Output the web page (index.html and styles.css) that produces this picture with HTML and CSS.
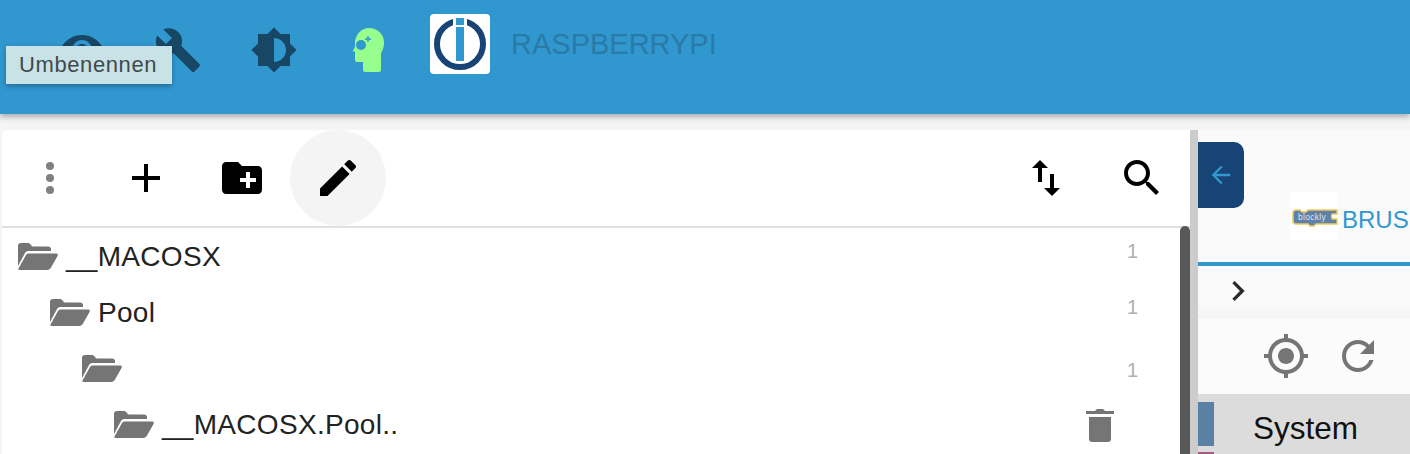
FILE: index.html
```html
<!DOCTYPE html>
<html lang="de">
<head>
  <meta charset="UTF-8">
  <meta name="viewport" content="width=device-width, initial-scale=1.0">
  <title>ioBroker</title>
  <link rel="stylesheet" href="styles.css">
</head>
<body>
  <!-- Kopfzeile -->
  <header class="app-bar">
    <svg class="bar-icon eye" viewBox="0 0 24 24"><path d="M12 4.5C7 4.5 2.73 7.61 1 12c1.73 4.39 6 7.5 11 7.5s9.27-3.11 11-7.5c-1.73-4.39-6-7.5-11-7.5zM12 17c-2.76 0-5-2.24-5-5s2.24-5 5-5 5 2.24 5 5-2.24 5-5 5zm0-8c-1.66 0-3 1.34-3 3s1.34 3 3 3 3-1.34 3-3-1.34-3-3-3z"/></svg>
    <svg class="bar-icon wrench" viewBox="0 0 24 24"><path d="M22.7 19l-9.1-9.1c.9-2.3.4-5-1.5-6.9-2-2-5-2.4-7.4-1.3L9 6 6 9 1.6 4.7C.4 7.1.9 10.1 2.9 12.1c1.9 1.9 4.6 2.4 6.9 1.5l9.1 9.1c.4.4 1 .4 1.4 0l2.3-2.3c.5-.4.5-1.1.1-1.4z"/></svg>
    <svg class="bar-icon contrast" viewBox="0 0 24 24"><path d="M20 15.31L23.31 12 20 8.69V4h-4.69L12 .69 8.69 4H4v4.69L.69 12 4 15.31V20h4.69L12 23.31 15.31 20H20v-4.69zM12 18V6c3.31 0 6 2.69 6 6s-2.69 6-6 6z"/></svg>
    <svg class="head-icon" viewBox="0 0 32 44">
      <path class="head-shape" d="M17 0c9 0 15 6.500 15 14.500 0 5.500-2 8.500-3 11V42a2 2 0 0 1-2 2H13a2 2 0 0 1-2-2v-8H5a2 2 0 0 1-2-2v-8.500H0.500L3 19V13C5 5 10 0 17 0z"/>
      <circle class="head-cut" cx="9" cy="17" r="5"/>
      <path class="head-cut" d="M13 10.300h2.300V8h1.400v2.300H19v1.400h-2.300V14h-1.400v-2.300H13z"/>
    </svg>
    <div class="logo">
      <svg viewBox="0 0 60 60">
        <circle class="logo-ring" cx="30" cy="30" r="23"/>
        <rect class="logo-gap" x="23" y="2" width="14" height="12"/>
        <rect class="logo-bar" x="26" y="4" width="8" height="7"/>
        <rect class="logo-bar" x="26" y="13" width="8" height="34"/>
      </svg>
    </div>
    <span class="host-name">RASPBERRYPI</span>
  </header>

  <div class="tooltip">Umbenennen</div>

  <div class="content">
    <!-- Skriptbaum -->
    <section class="tree-panel">
      <div class="toolbar">
        <div class="dots"><i></i><i></i><i></i></div>
        <button class="tool-btn add-btn"><svg viewBox="0 0 24 24"><path d="M19 13h-6v6h-2v-6H5v-2h6V5h2v6h6v2z"/></svg></button>
        <button class="tool-btn folder-btn"><svg viewBox="0 0 24 24"><path d="M20 6h-8l-2-2H4c-1.110 0-1.990.890-1.990 2L2 18c0 1.110.890 2 2 2h16c1.110 0 2-.890 2-2V8c0-1.110-.890-2-2-2zm-1 8h-3v3h-2v-3h-3v-2h3V9h2v3h3v2z"/></svg></button>
        <button class="tool-btn edit-btn"><svg viewBox="0 0 24 24"><path d="M3 17.250V21h3.750L17.810 9.940l-3.750-3.750L3 17.250zM20.710 7.040c.390-.390.390-1.020 0-1.410l-2.340-2.340c-.390-.390-1.020-.390-1.410 0l-1.830 1.830 3.750 3.750 1.830-1.830z"/></svg></button>
        <div class="toolbar-space"></div>
        <button class="tool-btn sort-btn"><svg viewBox="0 0 24 24"><path d="M9 3L5 6.990h3V14h2V6.990h3L9 3zm7 14.010V10h-2v7.010h-3L15 21l4-3.990h-3z"/></svg></button>
        <button class="tool-btn search-btn"><svg viewBox="0 0 24 24"><path d="M15.500 14h-.790l-.280-.270C15.410 12.590 16 11.110 16 9.500 16 5.910 13.090 3 9.500 3S3 5.910 3 9.500 5.910 16 9.500 16c1.610 0 3.090-.590 4.230-1.570l.270.280v.790l5 4.990L20.490 19l-4.990-5zm-6 0C7.010 14 5 11.990 5 9.500S7.010 5 9.500 5 14 7.010 14 9.500 11.990 14 9.500 14z"/></svg></button>
      </div>
      <div class="tree-body">
        <ul class="tree">
          <li class="tree-row">
            <svg class="folder" viewBox="0 0 40 27"><use href="#folder-open"/></svg>
            <span class="tree-name">__MACOSX</span>
            <span class="tree-count">1</span>
          </li>
          <li class="tree-row level-1">
            <svg class="folder" viewBox="0 0 40 27"><use href="#folder-open"/></svg>
            <span class="tree-name">Pool</span>
            <span class="tree-count">1</span>
          </li>
          <li class="tree-row level-2">
            <svg class="folder" viewBox="0 0 40 27"><use href="#folder-open"/></svg>
            <span class="tree-name"></span>
            <span class="tree-count">1</span>
          </li>
          <li class="tree-row level-3">
            <svg class="folder" viewBox="0 0 40 27"><use href="#folder-open"/></svg>
            <span class="tree-name">__MACOSX.Pool..</span>
            <svg class="trash" viewBox="0 0 28 36"><path d="M3 11h22v22a3 3 0 0 1-3 3H6a3 3 0 0 1-3-3zM0 5h9l2-2h6l2 2h9v3H0z"/></svg>
          </li>
        </ul>
        <div class="scroll-track"><div class="scroll-thumb"></div></div>
      </div>
    </section>

    <!-- rechte Seite -->
    <section class="side-panel">
      <div class="side-top">
        <div class="back-btn"><svg viewBox="0 0 24 24"><path d="M20 11H7.830l5.590-5.590L12 4l-8 8 8 8 1.410-1.410L7.830 13H20v-2z"/></svg></div>
        <div class="tab">
          <div class="tab-logo">
            <svg viewBox="0 0 48 48">
              <path class="blockly-block" d="M6 18h4l2 2h4l2-2h29v4h-4a1.500 1.500 0 0 0-1.500 1.500v2A1.500 1.500 0 0 0 43 27h4v5H26l-2 2h-4l-2-2H6a3 3 0 0 1-3-3v-8a3 3 0 0 1 3-3z"/>
              <text class="blockly-text" x="8" y="28">blockly</text>
            </svg>
          </div>
          <span class="tab-name">BRUS</span>
        </div>
      </div>
      <div class="tab-line"></div>
      <div class="crumb-row">
        <svg viewBox="0 0 24 24"><path d="M10 6L8.590 7.410 13.170 12l-4.580 4.590L10 18l6-6z"/></svg>
      </div>
      <div class="side-tools">
        <svg class="locate" viewBox="0 0 24 24"><path d="M12 8c-2.210 0-4 1.790-4 4s1.790 4 4 4 4-1.790 4-4-1.790-4-4-4zm8.940 3c-.460-4.170-3.770-7.480-7.940-7.940V1h-2v2.060C6.830 3.520 3.520 6.830 3.060 11H1v2h2.060c.460 4.170 3.770 7.480 7.940 7.940V23h2v-2.060c4.170-.460 7.480-3.770 7.940-7.940H23v-2h-2.060zM12 19c-3.870 0-7-3.130-7-7s3.130-7 7-7 7 3.130 7 7-3.130 7-7 7z"/></svg>
        <svg class="reload" viewBox="0 0 24 24"><path d="M17.650 6.350C16.200 4.900 14.210 4 12 4c-4.420 0-7.990 3.580-7.990 8s3.570 8 7.990 8c3.730 0 6.840-2.550 7.730-6h-2.080c-.820 2.330-3.040 4-5.650 4-3.310 0-6-2.690-6-6s2.690-6 6-6c1.660 0 3.140.690 4.220 1.780L13 11h7V4l-2.350 2.350z"/></svg>
      </div>
      <div class="category">
        <div class="category-colors"><i class="cat-blue"></i><i class="cat-pink"></i></div>
        <span class="category-name">System</span>
      </div>
    </section>
  </div>

  <svg class="defs" aria-hidden="true">
    <symbol id="folder-open" viewBox="0 0 40 27">
      <path d="M0 23V3a3 3 0 0 1 3-3h8l3.500 3.500H30a3 3 0 0 1 3 3V8H10.500a4 4 0 0 0-3.500 2z"/>
      <path d="M1.500 27c-.800 0-1.500-.600-1-1.500L8 12c.600-1 1.400-1.500 2.500-1.500H38c1.300 0 2.300 1 1.700 2.200L33 24.500c-.900 1.600-2 2.500-3.800 2.500z"/>
    </symbol>
  </svg>
</body>
</html>
```

FILE: styles.css
```css
* {
  box-sizing: border-box;
}

html, body {
  height: 100%;
}

body {
  margin: 0;
  overflow: hidden;
  background-color: #f5f5f5;
  font-family: "Liberation Sans", Arial, sans-serif;
}

button {
  border: none;
  background: none;
  padding: 0;
}

ul {
  list-style: none;
  margin: 0;
  padding: 0;
}

.defs {
  display: none;
}

/* Kopfzeile */
.app-bar {
  display: flex;
  align-items: flex-start;
  height: 114px;
  padding: 14px 0 0 58px;
  background-color: #3097cf;
  box-shadow: 0 3px 6px rgba(0, 0, 0, 0.3);
}

.bar-icon {
  width: 48px;
  height: 48px;
  flex: none;
  fill: #174764;
}

.eye {
  margin-top: 12px;
}

.wrench {
  margin: 12px 0 0 48px;
}

.contrast {
  margin: 12px 0 0 48px;
}

.head-icon {
  width: 32px;
  height: 44px;
  flex: none;
  margin: 14px 0 0 54px;
}

.head-shape {
  fill: #96ff8e;
}

.head-cut {
  fill: #3097cf;
}

.logo {
  width: 60px;
  height: 60px;
  flex: none;
  margin-left: 46px;
  background-color: #fff;
  border-radius: 4px;
}

.logo svg {
  display: block;
  width: 60px;
  height: 60px;
}

.logo-ring {
  fill: none;
  stroke: #174475;
  stroke-width: 6px;
}

.logo-gap {
  fill: #fff;
}

.logo-bar {
  fill: #3097cf;
}

.host-name {
  margin: 14px 0 0 21px;
  color: #2a7aa8;
  font-size: 29px;
  line-height: 32px;
}

.tooltip {
  position: absolute;
  left: 6px;
  top: 46px;
  width: 166px;
  height: 38px;
  padding-left: 13px;
  background-color: #c9e2e6;
  color: #3f4a4d;
  font-size: 22px;
  line-height: 37px;
  letter-spacing: 0.6px;
  box-shadow: 0 2px 5px rgba(0, 0, 0, 0.3);
}

/* Hauptbereich */
.content {
  display: flex;
  height: 340px;
}

.tree-panel {
  width: 1196px;
  margin: 16px 0 0 2px;
  flex: none;
  background-color: #fff;
  border-radius: 6px 0 0 0;
  overflow: hidden;
}

.toolbar {
  display: flex;
  align-items: center;
  height: 98px;
  border-bottom: 2px solid #e0e0e0;
  margin-right: 8px;
}

.dots {
  display: flex;
  flex-direction: column;
  gap: 4px;
  margin-left: 44px;
}

.dots i {
  display: block;
  width: 8px;
  height: 8px;
  border-radius: 50%;
  background-color: #808080;
}

.tool-btn {
  display: flex;
  align-items: center;
  justify-content: center;
  flex: none;
  width: 96px;
  height: 96px;
  border-radius: 50%;
}

.tool-btn svg {
  width: 48px;
  height: 48px;
  fill: #000;
}

.add-btn {
  margin-left: 44px;
}

.edit-btn {
  background-color: #f4f4f4;
}

.toolbar-space {
  flex: 1;
}

.tree-body {
  position: relative;
  height: 228px;
}

.tree {
  margin-right: 18px;
}

.tree-row {
  display: flex;
  align-items: center;
  height: 56px;
  padding: 0 0 0 16px;
  color: #222;
  font-size: 28px;
}

.level-1 {
  padding-left: 48px;
}

.level-2 {
  padding-left: 80px;
}

.level-3 {
  padding-left: 112px;
}

.folder {
  width: 40px;
  height: 27px;
  flex: none;
  fill: #757575;
}

.tree-name {
  flex: 1;
  margin-left: 8px;
  padding-top: 2px;
  letter-spacing: 0.3px;
}

.tree-count {
  margin: -9px 42px 0 0;
  color: #b0b0b0;
  font-size: 20px;
}

.level-2 .tree-count {
  margin-top: 4px;
}

.trash {
  width: 28px;
  height: 36px;
  flex: none;
  margin-right: 66px;
  fill: #757575;
}

.scroll-track {
  position: absolute;
  top: -100px;
  right: 0;
  bottom: 0;
  width: 8px;
  background-color: #ccc;
}

.scroll-thumb {
  position: absolute;
  top: 98px;
  left: -10px;
  bottom: 0;
  width: 10px;
  background-color: #585858;
  border-radius: 5px 5px 0 0;
}

/* rechte Seite */
.side-panel {
  flex: 1;
  min-width: 0;
  background-color: #fafafa;
  margin-top: 16px;
  overflow: hidden;
}

.side-top {
  display: flex;
  align-items: flex-start;
  height: 132px;
  padding-top: 12px;
}

.back-btn {
  display: flex;
  align-items: center;
  justify-content: center;
  width: 46px;
  height: 66px;
  flex: none;
  background-color: #174475;
  border-radius: 0 10px 10px 0;
}

.back-btn svg {
  width: 28px;
  height: 28px;
  fill: #3097cf;
}

.tab {
  display: flex;
  align-items: center;
  margin: 50px 0 0 46px;
  white-space: nowrap;
}

.tab-logo {
  width: 48px;
  height: 48px;
  flex: none;
  background-color: #fff;
  border-radius: 4px;
}

.tab-logo svg {
  display: block;
  width: 48px;
  height: 48px;
}

.blockly-block {
  fill: #5f81a8;
  stroke: #f0c95a;
  stroke-width: 1.500px;
}

.blockly-text {
  fill: #dfe6ee;
  font-size: 8.500px;
  letter-spacing: 0.3px;
  font-family: "Liberation Sans", Arial, sans-serif;
}

.tab-name {
  margin: 8px 0 0 4px;
  color: #3097cf;
  font-size: 24px;
}

.tab-line {
  height: 4px;
  background-color: #3097cf;
}

.crumb-row {
  display: flex;
  align-items: center;
  height: 52px;
  padding: 0 0 2px 20px;
  background-image: linear-gradient(to bottom, #fafafa 70%, #f3f3f3);
}

.crumb-row svg {
  width: 40px;
  height: 40px;
  fill: #2a2a2a;
}

.side-tools {
  display: flex;
  align-items: center;
  height: 76px;
  padding-left: 64px;
  background-color: #fbfbfb;
}

.side-tools svg {
  flex: none;
  width: 48px;
  height: 48px;
  fill: #757575;
}

.reload {
  margin-left: 24px;
}

.category {
  display: flex;
  height: 60px;
  background-color: #dcdcdc;
}

.category-colors {
  flex: none;
  width: 16px;
  padding-top: 8px;
}

.category-colors i {
  display: block;
}

.cat-blue {
  height: 44px;
  background-color: #5b80a5;
}

.cat-pink {
  height: 6px;
  margin-top: 6px;
  background-color: #a55b80;
}

.category-name {
  margin: 16px 0 0 39px;
  color: #111;
  font-size: 31.500px;
  line-height: 36px;
}
```
